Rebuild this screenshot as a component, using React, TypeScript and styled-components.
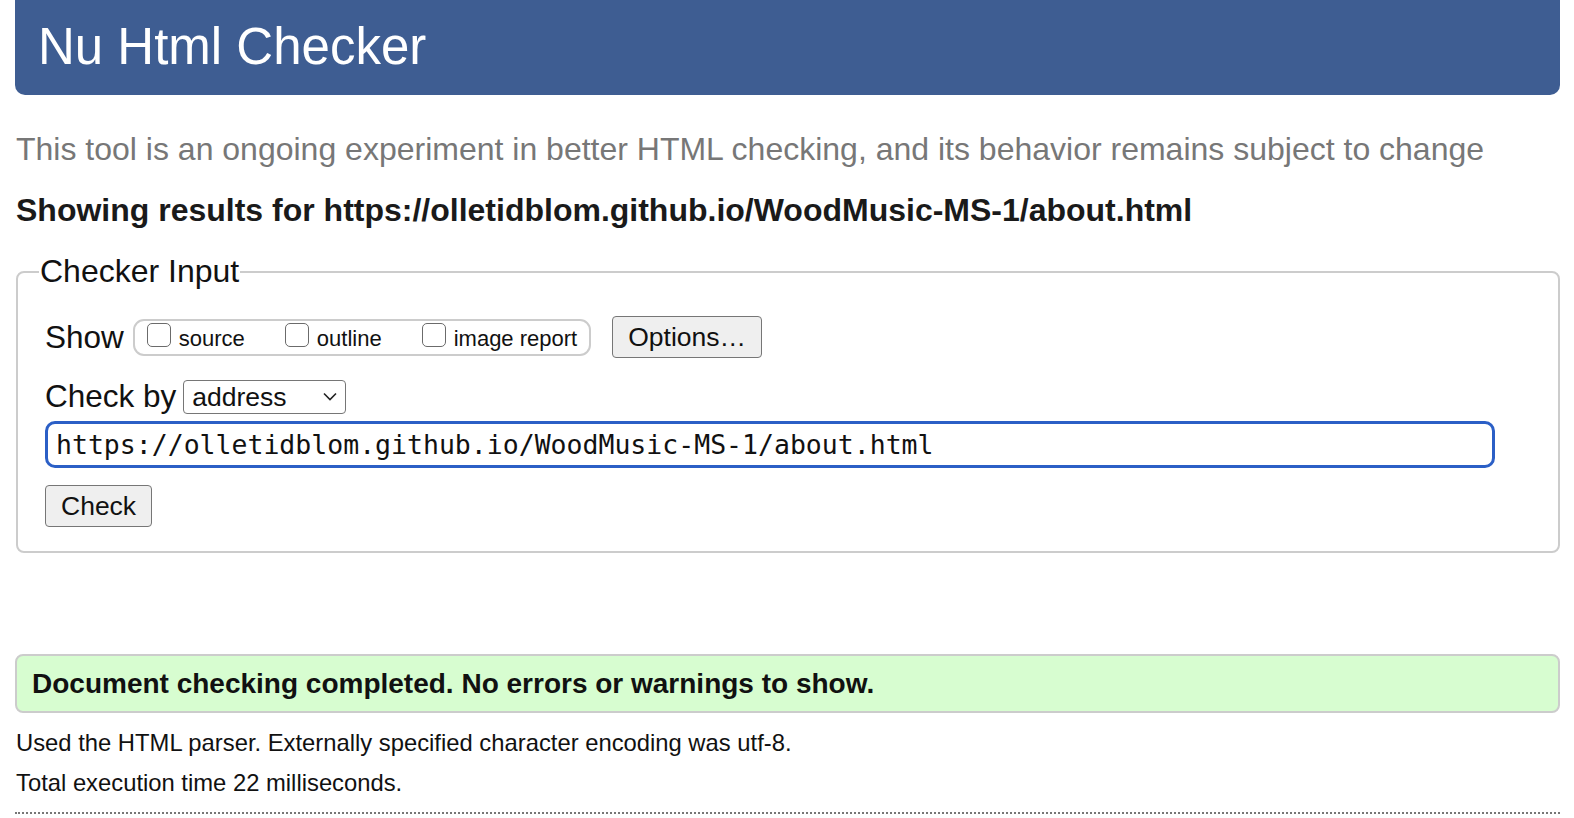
import React from "react";
import styled, { createGlobalStyle } from "styled-components";

const Global = createGlobalStyle`
  html, body { margin: 0; padding: 0; background: #fff; }
  body { font-family: "Liberation Sans", Arial, sans-serif; color: #111; }
`;

const Page = styled.div`
  display: flex;
  flex-direction: column;
  padding: 0 14px 0 15px;
`;

const Header = styled.header`
  height: 95px;
  background: #3e5d92;
  border-radius: 0 0 10px 10px;
  display: flex;
  align-items: center;
  padding-left: 23px;
  padding-bottom: 2px;
  box-sizing: border-box;
`;

const Title = styled.h1`
  margin: 0;
  font-size: 51px;
  font-weight: 400;
  color: #fff;
  line-height: 1;
`;

const Lead = styled.p`
  margin: 36px 0 0 1px;
  font-size: 32px;
  line-height: 37px;
  color: #777;
`;

const Results = styled.h2`
  margin: 24px 0 0 1px;
  font-size: 32px;
  line-height: 37px;
  font-weight: 700;
  color: #1a1a1a;
`;

const Fieldset = styled.fieldset`
  margin: 24px 0 0 1px;
  min-width: 0;
  box-sizing: border-box;
  border: 2px solid #ccc;
  border-radius: 8px;
  padding: 0 26px 24px 27px;
  display: flex;
  flex-direction: column;
  align-items: flex-start;
`;

const Legend = styled.legend`
  font-size: 32px;
  line-height: 37px;
  padding: 0 1px;
  margin-left: -6px;
  color: #111;
`;

const Row = styled.div<{ $top: number }>`
  display: flex;
  align-items: center;
  margin-top: ${(p) => p.$top}px;
`;

const Label = styled.span`
  font-size: 31.5px;
  line-height: 37px;
  color: #111;
`;

const Group = styled.div`
  display: flex;
  align-items: center;
  height: 37px;
  box-sizing: border-box;
  border: 2px solid #ccc;
  border-radius: 11px;
  margin-left: 9px;
  padding: 0 12px 0 12px;
  gap: 40px;
`;

const Option = styled.label`
  display: flex;
  align-items: flex-end;
  font-size: 22px;
  color: #111;
`;

const Box = styled.span`
  width: 24px;
  height: 24px;
  box-sizing: border-box;
  border: 1.5px solid #6b6b6b;
  border-radius: 5px;
  margin-right: 8px;
  margin-bottom: 5px;
  background: #fff;
`;

const Button = styled.button<{ $ml?: number }>`
  font-family: "Liberation Sans", Arial, sans-serif;
  font-size: 26.5px;
  height: 42px;
  padding: 0 15px;
  background: #efefef;
  border: 1.5px solid #767676;
  border-radius: 4px;
  color: #111;
  margin-left: ${(p) => p.$ml ?? 0}px;
`;

const SelectWrap = styled.div`
  position: relative;
  margin-left: 7px;
  width: 163px;
  height: 34px;
`;

const Select = styled.select`
  appearance: none;
  width: 100%;
  height: 100%;
  font-family: "Liberation Sans", Arial, sans-serif;
  font-size: 26.5px;
  padding: 0 0 0 8px;
  border: 1.5px solid #767676;
  border-radius: 4px;
  background: #fff;
  color: #111;
`;

const Chevron = styled.svg`
  position: absolute;
  right: 9px;
  top: 12px;
  pointer-events: none;
`;

const UrlInput = styled.input`
  margin-top: 6px;
  width: 1450px;
  height: 47px;
  box-sizing: border-box;
  border: 3px solid #2b5fc6;
  border-radius: 10px;
  padding: 0 0 0 8px;
  font-family: "DejaVu Sans Mono", "Liberation Mono", monospace;
  font-size: 26.5px;
  color: #111;
  outline: none;
  caret-color: #000;
`;

const Spacer = styled.div`
  height: 101px;
`;

const Success = styled.div`
  height: 59px;
  box-sizing: border-box;
  background: #d7fdd0;
  border: 2px solid #ccc;
  border-radius: 8px;
  display: flex;
  align-items: center;
  padding-left: 15px;
  padding-top: 1px;
  font-size: 28px;
  font-weight: 700;
  color: #111;
`;

const Note = styled.p<{ $top: number }>`
  margin: ${(p) => p.$top}px 0 0 1px;
  font-size: 23.8px;
  line-height: 28px;
  color: #111;
`;

const Dotted = styled.hr`
  margin: 15px 0 0 0;
  border: 0;
  border-top: 2px dotted #777;
  height: 0;
`;

export default function App() {
  return (
    <>
      <Global />
      <Page>
        <Header>
          <Title>Nu Html Checker</Title>
        </Header>
        <Lead>
          This tool is an ongoing experiment in better HTML checking, and its
          behavior remains subject to change
        </Lead>
        <Results>
          Showing results for https://olletidblom.github.io/WoodMusic-MS-1/about.html
        </Results>
        <Fieldset>
          <Legend>Checker Input</Legend>
          <Row $top={26}>
            <Label>Show</Label>
            <Group>
              <Option>
                <Box />
                source
              </Option>
              <Option>
                <Box />
                outline
              </Option>
              <Option>
                <Box />
                image report
              </Option>
            </Group>
            <Button $ml={21}>Options…</Button>
          </Row>
          <Row $top={20}>
            <Label>Check by</Label>
            <SelectWrap>
              <Select defaultValue="address">
                <option value="address">address</option>
              </Select>
              <Chevron width="14" height="9" viewBox="0 0 14 9">
                <path d="M1 1.5 L7 7.5 L13 1.5" fill="none" stroke="#222" strokeWidth="1.6" />
              </Chevron>
            </SelectWrap>
          </Row>
          <UrlInput
            defaultValue="https://olletidblom.github.io/WoodMusic-MS-1/about.html"
            autoFocus
          />
          <Row $top={17}>
            <Button>Check</Button>
          </Row>
        </Fieldset>
        <Spacer />
        <Success>Document checking completed. No errors or warnings to show.</Success>
        <Note $top={16}>
          Used the HTML parser. Externally specified character encoding was utf-8.
        </Note>
        <Note $top={12}>Total execution time 22 milliseconds.</Note>
        <Dotted />
      </Page>
    </>
  );
}
